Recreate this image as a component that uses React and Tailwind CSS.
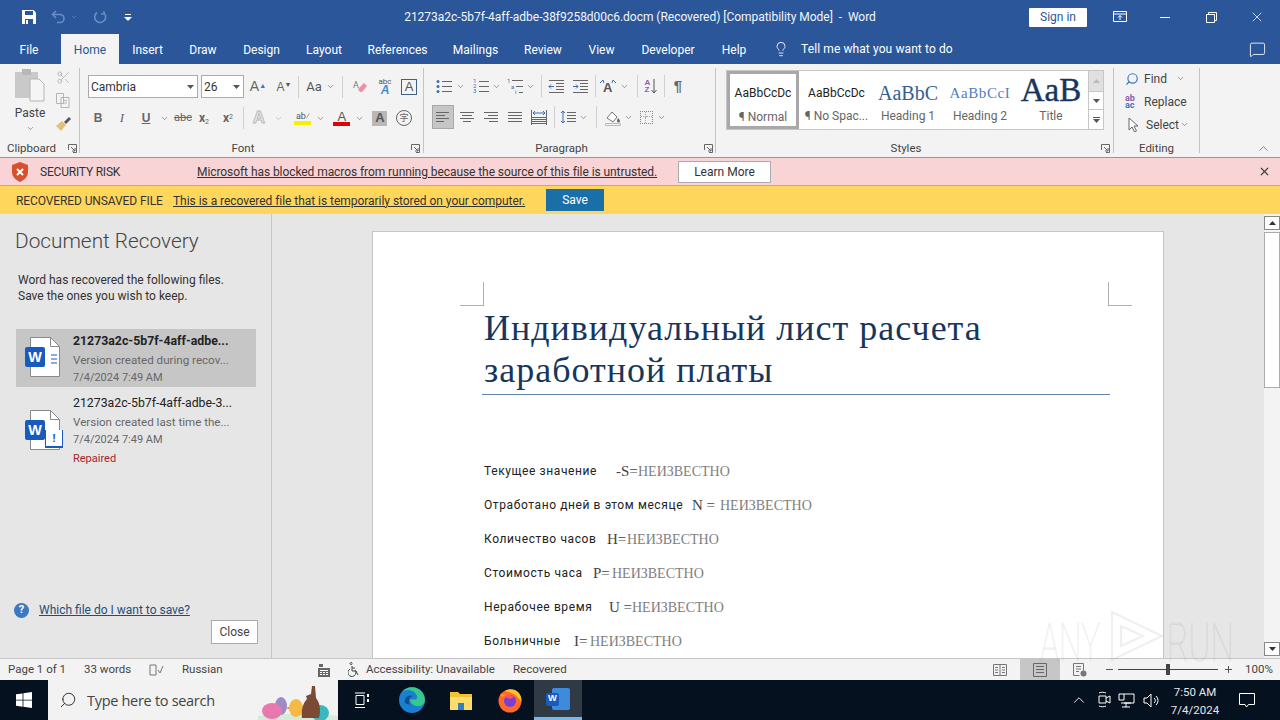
import React from 'react';
import { ChevronDown, ChevronUp, Lightbulb, MessageSquare, Scissors, Search, X } from 'lucide-react';

const Chev = ({ className = '' }) => <ChevronDown size={9} strokeWidth={1.5} className={`text-[#555] shrink-0 ${className}`} />;

const Launcher = () => (
  <svg width="9" height="9" viewBox="0 0 9 9" className="shrink-0" fill="none" stroke="#666">
    <path d="M.5 6V.5H8.5V8.5H5" />
    <path d="M3 3l4 4M4 7h3V4" />
  </svg>
);

const Sep = ({ className = '' }) => <div className={`w-px h-[22px] bg-[#d0d0d0] shrink-0 ${className}`} />;

const GroupSep = () => <div className="w-px my-[4px] bg-[#c4c4c4] shrink-0" />;

// little "lines" glyph used by the paragraph buttons
const Lines = ({ ys, x1 = 1, x2 = 15, color = '#666', w = 16, h = 16, extra = null }) => (
  <svg width={w} height={h} viewBox={`0 0 ${w} ${h}`} fill="none" stroke={color}>
    {ys.map((y, i) => (
      <path key={i} d={`M${Array.isArray(x1) ? x1[i] : x1} ${y + 0.5}H${Array.isArray(x2) ? x2[i] : x2}`} />
    ))}
    {extra}
  </svg>
);

const WordBadge = ({ size = 20 }) => (
  <div
    className="bg-[#185abd] rounded-[2px] text-white font-bold flex items-center justify-center font-['Liberation_Sans',sans-serif] leading-none"
    style={{ width: size, height: size, fontSize: size * 0.72 }}
  >
    W
  </div>
);

const tabs = [
  { label: 'File', cls: 'w-[58px]' },
  { label: 'Home', cls: 'w-[58px] ml-[3px] bg-[#f3f3f3] text-[#2b579a]' },
  { label: 'Insert', cls: 'w-[57px]' },
  { label: 'Draw', cls: 'w-[54px]' },
  { label: 'Design', cls: 'w-[63px]' },
  { label: 'Layout', cls: 'w-[62px]' },
  { label: 'References', cls: 'w-[85px]' },
  { label: 'Mailings', cls: 'w-[71px]' },
  { label: 'Review', cls: 'w-[64px]' },
  { label: 'View', cls: 'w-[53px]' },
  { label: 'Developer', cls: 'w-[80px]' },
  { label: 'Help', cls: 'w-[52px]' },
];

function TitleBar() {
  return (
    <div className="bg-[#2b579a] text-white h-[64px] shrink-0 flex flex-col">
      <div className="h-[34px] grid grid-cols-[1fr_auto_1fr] items-center">
        <div className="flex items-center pl-[21px]">
          <svg width="16" height="16" viewBox="0 0 16 16">
            <path fill="#fff" d="M1 1h11.5L15 3.5V15H1z" />
            <path fill="#2b579a" d="M4 2h8v4H4zM4 10h8v5H4z" />
            <path fill="#fff" d="M5 11h2v4H5z" />
          </svg>
          <svg width="16" height="14" viewBox="0 0 16 14" fill="none" stroke="#6a8cc0" strokeWidth="1.6" className="ml-[14px]">
            <path d="M5 1L1.5 4.5 5 8M2 4.5h7a4 4 0 010 8H6" />
          </svg>
          <ChevronDown size={8} className="text-[#6a8cc0] ml-[3px]" />
          <svg width="14" height="14" viewBox="0 0 14 14" fill="none" stroke="#6a8cc0" strokeWidth="1.6" className="ml-[15px]">
            <path d="M4 2.5a5.5 5.5 0 107 .5M11 1v3H8" />
          </svg>
          <svg width="8" height="7" viewBox="0 0 8 7" className="ml-[17px]" fill="#fff">
            <path d="M1 0h6v1H1zM0 3h8L4 7z" />
          </svg>
        </div>
        <div className="text-[12px] text-[#f2f5fa] whitespace-nowrap tracking-[-0.03px]">
          21273a2c-5b7f-4aff-adbe-38f9258d00c6.docm (Recovered) [Compatibility Mode] &nbsp;-&nbsp; Word
        </div>
        <div className="flex items-center justify-end h-full">
          <div className="w-[58px] h-[19px] bg-white rounded-[1px] text-[#2b579a] text-[12px] flex items-center justify-center">Sign in</div>
          <div className="w-[55px] pl-[10px] flex justify-center">
            <svg width="14" height="12" viewBox="0 0 14 12" fill="none" stroke="#fff">
              <path d="M.5.5h13v10H.5zM.5 3h13M7 9V4.5M5 6.5l2-2 2 2" />
            </svg>
          </div>
          <div className="w-[46px] flex justify-center">
            <div className="w-[10px] h-px bg-white" />
          </div>
          <div className="w-[46px] flex justify-center">
            <svg width="11" height="11" viewBox="0 0 11 11" fill="none" stroke="#fff">
              <path d="M.5 2.5h8v8h-8zM2.5 2.5v-2h8v8h-2" />
            </svg>
          </div>
          <div className="w-[46px] flex justify-center pr-[1px]">
            <X size={16} strokeWidth={1.1} />
          </div>
        </div>
      </div>
      <div className="h-[30px] flex text-[12px] items-stretch">
        {tabs.map((t) => (
          <div key={t.label} className={`flex items-center justify-center pt-[1px] ${t.cls}`}>{t.label}</div>
        ))}
        <div className="flex items-center ml-[13px]">
          <Lightbulb size={16} strokeWidth={1.3} />
          <span className="ml-[12px] text-[12px] tracking-[0.1px]">Tell me what you want to do</span>
        </div>
        <div className="ml-auto flex items-center pr-[14px]">
          <MessageSquare size={17} strokeWidth={1.2} />
        </div>
      </div>
    </div>
  );
}

const GroupLabel = ({ children, launcher = true, className = '' }) => (
  <div className={`h-[15px] shrink-0 flex items-center text-[11.5px] text-[#444] ${className}`}>
    <span className={`flex-1 text-center ${launcher ? 'pr-[5px]' : ''}`}>{children}</span>
    {launcher && <Launcher />}
  </div>
);

const Tool = ({ children, className = 'w-6' }) => (
  <div className={`h-6 flex items-center justify-center shrink-0 ${className}`}>{children}</div>
);

function ClipboardGroup() {
  return (
    <div className="w-[79px] shrink-0 flex flex-col mb-[1px]">
      <div className="flex-1 flex pl-[13px] pt-[5px]">
        <div className="w-[34px] flex flex-col items-center">
          <svg width="30" height="33" viewBox="0 0 30 33">
            <rect x="0" y="3" width="23" height="26" fill="#c9c9c9" />
            <rect x="7" y="0" width="9" height="6" fill="#b8b8b8" />
            <path d="M15 10h9l5 5v17H15z" fill="#f5f5f5" stroke="#b5b5b5" />
          </svg>
          <span className="text-[12px] text-[#444] mt-[3px] leading-[16px]">Paste</span>
          <Chev className="mt-[3px]" />
        </div>
        <div className="flex flex-col items-center ml-[1px] w-[30px] pt-[1px] gap-[7px]">
          <Scissors size={15} strokeWidth={1.2} className="text-[#aaa]" />
          <svg width="16" height="16" viewBox="0 0 16 16" fill="none" stroke="#b5b5b5">
            <path d="M1.5 1.5h7v10h-7zM6 5.5h8v10H6zM8 8.5h4M8 11h4" />
          </svg>
          <svg width="17" height="17" viewBox="0 0 17 17">
            <path d="M1 11l6-5 4 4-5 6z" fill="#e3c07a" />
            <path d="M9 7l5-5 2 2-5 5z" fill="#555" />
          </svg>
        </div>
      </div>
      <GroupLabel className="pr-[2px]">Clipboard</GroupLabel>
    </div>
  );
}

function FontGroup() {
  return (
    <div className="w-[343px] shrink-0 flex flex-col mb-[1px]">
      <div className="flex-1 pt-[11px]">
        <div className="flex items-center h-[23px] pl-[8px]">
          <div className="w-[110px] h-[23px] border border-[#ababab] bg-white text-[12px] text-[#333] pl-[2px] flex items-center justify-between pr-[3px]">
            Cambria
            <svg width="7" height="4" viewBox="0 0 7 4" fill="#555"><path d="M0 0h7L3.5 4z" /></svg>
          </div>
          <div className="w-[43px] h-[23px] ml-[3px] border border-[#ababab] bg-white text-[12px] text-[#333] pl-[2px] flex items-center justify-between pr-[3px]">
            26
            <svg width="7" height="4" viewBox="0 0 7 4" fill="#555"><path d="M0 0h7L3.5 4z" /></svg>
          </div>
          <Tool className="w-[26px] ml-[1px]">
            <span className="text-[#666] text-[14px] font-['Liberation_Sans',sans-serif]">A<sup className="text-[7px] text-[#3f6fb5]">▲</sup></span>
          </Tool>
          <Tool className="w-[26px]">
            <span className="text-[#666] text-[12px] font-['Liberation_Sans',sans-serif]">A<sup className="text-[7px] text-[#555]">▼</sup></span>
          </Tool>
          <Sep className="ml-[1px]" />
          <div className="w-[43px] h-6 flex items-center justify-center gap-[4px] text-[#555] text-[13px]">Aa<Chev /></div>
          <Sep />
          <Tool className="w-[34px]">
            <svg width="15" height="15" viewBox="0 0 15 15">
              <text x="0" y="9" fontSize="9" fill="#777">A</text>
              <path d="M5 10l6-6 3 3-5 6H7z" fill="#ee8fa3" />
            </svg>
          </Tool>
          <Tool className="w-[14px] ml-[1px]">
            <div className="flex flex-col items-center leading-none -space-y-[2px]">
              <span className="text-[8px] text-[#555]">abc</span>
              <span className="text-[12px] font-bold italic text-[#3d8ecf] font-['Liberation_Sans',sans-serif]">A</span>
            </div>
          </Tool>
          <div className="ml-[9px] w-[16px] h-[16px] border border-[#3f6184] flex items-center justify-center text-[13px] text-[#555] font-['Liberation_Sans',sans-serif] leading-none">A</div>
        </div>
        <div className="flex items-center h-[24px] pl-[6px] mt-[8px] text-[#666]">
          <Tool><span className="text-[12px] font-bold font-['Liberation_Sans',sans-serif]">B</span></Tool>
          <Tool><span className="text-[13px] italic font-['Liberation_Serif',serif]">I</span></Tool>
          <Tool><span className="text-[12px] font-bold underline font-['Liberation_Sans',sans-serif]">U</span></Tool>
          <Tool className="w-[12px]"><Chev /></Tool>
          <Tool className="ml-[4px]"><span className="text-[11px] line-through">abc</span></Tool>
          <Tool><span className="text-[12px] font-bold">x<sub className="text-[7px] font-normal">2</sub></span></Tool>
          <Tool><span className="text-[12px] font-bold">x<sup className="text-[7px] font-normal">2</sup></span></Tool>
          <Sep className="ml-[3px]" />
          <Tool className="w-[30px]"><span className="text-[17px] text-[#ededed] [-webkit-text-stroke:1px_#bbb] font-['Liberation_Sans',sans-serif] font-bold">A</span></Tool>
          <Tool className="w-[10px]"><ChevronDown size={9} className="text-[#bbb]" /></Tool>
          <Tool className="w-[24px] ml-[7px]">
            <div className="flex flex-col items-center">
              <span className="text-[9px] leading-[10px] text-[#555]">ab<span className="text-[#777]">⁄</span></span>
              <div className="w-[17px] h-[4px] bg-[#f4f000]" />
            </div>
          </Tool>
          <Tool className="w-[12px]"><Chev /></Tool>
          <Tool className="w-[26px] ml-[2px]">
            <div className="flex flex-col items-center">
              <span className="text-[13px] leading-[11px] text-[#555] font-['Liberation_Sans',sans-serif]">A</span>
              <div className="w-[17px] h-[4px] bg-[#e00000]" />
            </div>
          </Tool>
          <Tool className="w-[10px]"><Chev /></Tool>
          <Tool className="ml-[6px] w-[18px]">
            <div className="w-[15px] h-[15px] bg-[#b8b8b8] flex items-center justify-center text-[13px] font-bold text-[#555] font-['Liberation_Sans',sans-serif]">A</div>
          </Tool>
          <Tool className="ml-[6px] w-[18px]">
            <div className="w-[16px] h-[16px] rounded-full border border-[#666] flex items-center justify-center text-[9px] font-['Noto_Sans_CJK_SC',sans-serif]">字</div>
          </Tool>
        </div>
      </div>
      <GroupLabel className="pr-[3px]">Font</GroupLabel>
    </div>
  );
}

function ParagraphGroup() {
  const bullets = (
    <Lines ys={[3, 8, 13]} x1={6} x2={16} extra={<g fill="#3d6db0" stroke="none"><circle cx="2" cy="3.5" r="1.5" /><circle cx="2" cy="8.5" r="1.5" /><circle cx="2" cy="13.5" r="1.5" /></g>} />
  );
  const numbers = (
    <Lines ys={[3, 8, 13]} x1={6} x2={16} extra={<g fill="#3d6db0" stroke="none" fontSize="6"><text x="0" y="5">1</text><text x="0" y="10">2</text><text x="0" y="15">3</text></g>} />
  );
  const multi = (
    <Lines ys={[2, 8, 14]} x1={[5, 9, 12]} x2={16} extra={<g fill="#3d6db0" stroke="none" fontSize="6"><text x="0" y="5">1</text><text x="4" y="11">a</text><text x="8" y="16">i</text></g>} />
  );
  return (
    <div className="w-[291px] shrink-0 flex flex-col mb-[1px]">
      <div className="flex-1 pt-[10px]">
        <div className="flex items-center h-6 pl-[10px]">
          <Tool className="w-[20px]">{bullets}</Tool>
          <Chev className="ml-[2px]" />
          <Tool className="w-[20px] ml-[6px]">{numbers}</Tool>
          <Chev className="ml-[1px]" />
          <Tool className="w-[20px] ml-[4px]">{multi}</Tool>
          <Chev className="ml-[1px]" />
          <Sep className="ml-[6px]" />
          <Tool className="w-[24px] ml-[2px]">
            <Lines ys={[2, 5, 8, 11, 14]} x1={[1, 8, 8, 8, 1]} x2={16} extra={<path d="M6 8.5H1M3 6.5L1 8.5l2 2" stroke="#3d6db0" />} />
          </Tool>
          <Tool className="w-[24px]">
            <Lines ys={[2, 5, 8, 11, 14]} x1={[1, 8, 8, 8, 1]} x2={16} extra={<path d="M1 8.5h5M4 6.5l2 2-2 2" stroke="#3d6db0" />} />
          </Tool>
          <Sep className="ml-[3px]" />
          <Tool className="w-[24px]">
            <svg width="18" height="16" viewBox="0 0 18 16" fill="none">
              <text x="4" y="14" fontSize="13" fontWeight="bold" fill="#555" fontFamily="Liberation Sans">A</text>
              <path d="M1 5l3-3 1 3M17 5l-3-3-1 3" stroke="#3d6db0" />
            </svg>
          </Tool>
          <Chev />
          <Sep className="ml-[8px]" />
          <Tool className="w-[24px] ml-[1px]">
            <div className="flex items-center">
              <div className="text-[8px] leading-[7px] font-bold text-[#8a5fb5] font-['Liberation_Sans',sans-serif]">A<br />Z</div>
              <svg width="6" height="15" viewBox="0 0 6 15" fill="none" stroke="#555" className="ml-[1px]"><path d="M3 0v14M.5 11L3 14l2.5-3" /></svg>
            </div>
          </Tool>
          <Sep className="ml-[1px]" />
          <Tool className="w-[24px] ml-[1px]"><span className="text-[15px] text-[#666] font-['Liberation_Sans',sans-serif] font-bold">¶</span></Tool>
        </div>
        <div className="flex items-center h-[24px] pl-[8px] mt-[7px]">
          <Tool className="w-[22px] bg-[#c6c6c6] border border-[#a8a8a8]"><Lines ys={[3, 6, 9, 12]} x2={[14, 10, 14, 9]} /></Tool>
          <Tool className="w-[24px] ml-[1px]"><Lines ys={[3, 6, 9, 12]} x1={[1, 3, 1, 4]} x2={[15, 13, 15, 12]} /></Tool>
          <Tool className="w-[24px]"><Lines ys={[3, 6, 9, 12]} x1={[1, 5, 1, 6]} /></Tool>
          <Tool className="w-[24px]"><Lines ys={[3, 6, 9, 12]} /></Tool>
          <Tool className="w-[24px]">
            <Lines ys={[8, 10, 12, 14]} extra={<><path d="M.5 1v15M15.5 1v15" stroke="#666" /><path d="M2 4h12M4 2L2 4l2 2M12 2l2 2-2 2" stroke="#3d6db0" /></>} />
          </Tool>
          <Sep className="ml-[3px]" />
          <Tool className="w-[20px] ml-[3px]">
            <Lines ys={[3, 6, 9, 12]} x1={7} x2={16} extra={<path d="M3 2v12M1 4l2-2 2 2M1 12l2 2 2-2" stroke="#3d6db0" />} />
          </Tool>
          <Chev className="ml-[1px]" />
          <Sep className="ml-[8px]" />
          <Tool className="w-[20px] ml-[6px]">
            <svg width="17" height="17" viewBox="0 0 17 17" fill="none">
              <path d="M2 9l5-6 5 5-4 5z" stroke="#777" fill="#fff" />
              <path d="M13 9s2 2 2 3a1.5 1.5 0 01-3 0c0-1 1-3 1-3z" fill="#666" />
              <path d="M.5 14.5h15v2H.5z" stroke="#bbb" />
            </svg>
          </Tool>
          <Chev className="ml-[1px]" />
          <Tool className="w-[16px] ml-[5px]">
            <div className="w-[13px] h-[13px] border border-dotted border-[#888] grid grid-cols-2 grid-rows-2"><div className="border-r border-b border-dotted border-[#aaa]" /><div className="border-b border-dotted border-[#aaa]" /><div className="border-r border-dotted border-[#aaa]" /><div /></div>
          </Tool>
          <Chev className="ml-[3px]" />
        </div>
      </div>
      <GroupLabel className="pr-[2px]">Paragraph</GroupLabel>
    </div>
  );
}

const styles = [
  { cls: 'w-[71px] ml-[2px]', preview: 'AaBbCcDc', label: '¶ No Spac...', pv: 'text-[12px] text-[#222]' },
  { cls: 'w-[72px]', preview: 'AaBbC', label: 'Heading 1', pv: "text-[20px] text-[#365f91] font-['Liberation_Serif',serif]" },
  { cls: 'w-[72px]', preview: 'AaBbCcI', label: 'Heading 2', pv: "text-[15px] text-[#4f81bd] font-['Liberation_Serif',serif] tracking-[0.6px]" },
  { cls: 'w-[70px]', preview: 'AaB', label: 'Title', pv: "text-[33px] text-[#17365d] font-['Liberation_Serif',serif] pb-[5px] [-webkit-text-stroke:0.4px_#17365d]" },
];

function StylesGroup() {
  return (
    <div className="w-[397px] shrink-0 flex flex-col mb-[1px]">
      <div className="flex-1 pt-[6px] pl-[10px]">
        <div className="w-[378px] h-[60px] border border-[#c6c6c6] bg-white flex">
          <div className="w-[72px] h-[58px] border-[3px] border-[#a8a8a8] flex flex-col items-center overflow-hidden outline-1 outline-white -outline-offset-4">
            <div className="h-[34px] mt-[2px] flex items-center text-[12px] text-[#222] whitespace-nowrap">AaBbCcDc</div>
            <div className="text-[12px] text-[#666] leading-[14px]">¶ Normal</div>
          </div>
          {styles.map((s) => (
            <div key={s.label} className={`h-[58px] flex flex-col items-center overflow-hidden ${s.cls}`}>
              <div className={`h-[30px] mt-[7px] flex items-center justify-center whitespace-nowrap w-full overflow-hidden leading-none ${s.pv}`}>{s.preview}</div>
              <div className="text-[12px] text-[#666] leading-[14px] mt-[1px] whitespace-nowrap">{s.label}</div>
            </div>
          ))}
          <div className="ml-auto w-[15px] border-l border-[#c6c6c6] flex flex-col">
            <div className="h-[21px] bg-[#e0e0e0] border-b border-[#c6c6c6] flex items-center justify-center">
              <svg width="7" height="4" viewBox="0 0 7 4" fill="#bbb"><path d="M0 4h7L3.5 0z" /></svg>
            </div>
            <div className="h-[18px] border-b border-[#c6c6c6] flex items-center justify-center">
              <svg width="7" height="4" viewBox="0 0 7 4" fill="#555"><path d="M0 0h7L3.5 4z" /></svg>
            </div>
            <div className="flex-1 flex flex-col items-center justify-center gap-[1px]">
              <div className="w-[7px] h-px bg-[#555]" />
              <svg width="7" height="4" viewBox="0 0 7 4" fill="#555"><path d="M0 0h7L3.5 4z" /></svg>
            </div>
          </div>
        </div>
      </div>
      <GroupLabel className="pr-[3px]">Styles</GroupLabel>
    </div>
  );
}

function EditingGroup() {
  return (
    <div className="w-[85px] shrink-0 flex flex-col mb-[1px]">
      <div className="flex-1 pt-[3px] pl-[11px] text-[12px] text-[#444]">
        <div className="h-[23px] flex items-center">
          <Search size={14} strokeWidth={2} className="text-[#3d78c0] -scale-x-100" />
          <span className="ml-[5px]">Find</span>
          <Chev className="ml-[9px]" />
        </div>
        <div className="h-[23px] flex items-center">
          <div className="text-[9px] leading-[7px] font-bold text-[#3d78c0] w-[16px]"><span className="text-[#8a5fb5]">ab</span><br />ac</div>
          <span className="ml-[3px]">Replace</span>
        </div>
        <div className="h-[23px] flex items-center">
          <svg width="12" height="15" viewBox="0 0 12 15" fill="#fff" stroke="#666" className="ml-[3px]"><path d="M1 1l9 8H6l2.5 5-2 1L4 10l-3 3z" /></svg>
          <span className="ml-[6px]">Select</span>
          <Chev className="ml-[1px]" />
        </div>
      </div>
      <GroupLabel launcher={false}>Editing</GroupLabel>
    </div>
  );
}

function Ribbon() {
  return (
    <div className="h-[93px] bg-[#f3f3f3] shrink-0 flex">
      <ClipboardGroup />
      <GroupSep />
      <FontGroup />
      <GroupSep />
      <ParagraphGroup />
      <GroupSep />
      <StylesGroup />
      <GroupSep />
      <EditingGroup />
      <GroupSep />
      <div className="flex-1 flex items-end justify-end pr-[9px] pb-[1px]">
        <ChevronUp size={15} strokeWidth={1.1} className="text-[#555]" />
      </div>
    </div>
  );
}

function SecurityBar() {
  return (
    <div className="h-[29px] shrink-0 bg-[#f9d4d6] border-t border-[#b9878a] border-b-[1px] border-b-[#d6a56a] flex items-center text-[12px] text-[#333]">
      <svg width="20" height="20" viewBox="0 0 20 20" className="ml-[10px]">
        <path d="M10 0l8 3v7c0 5-4 8-8 10-4-2-8-5-8-10V3z" fill="#d9512c" />
        <path d="M7 7l6 6M13 7l-6 6" stroke="#fff" strokeWidth="2" />
      </svg>
      <span className="ml-[10px] w-[157px] pt-[1px] tracking-[-0.2px]">SECURITY RISK</span>
      <span className="underline tracking-[-0.07px] w-[481px] pt-[1px] whitespace-nowrap">Microsoft has blocked macros from running because the source of this file is untrusted.</span>
      <div className="w-[93px] h-[22px] bg-white border border-[#ababab] flex items-center justify-center text-[#333]">Learn More</div>
      <X size={13} strokeWidth={2.2} className="ml-auto mr-[9px] text-[#444]" />
    </div>
  );
}

function RecoveryBar() {
  return (
    <div className="h-[28px] shrink-0 bg-[#ffd65c] flex items-center text-[12px] text-[#333]">
      <span className="ml-[16px] w-[157px] pt-[1px] whitespace-nowrap tracking-[-0.1px]">RECOVERED UNSAVED FILE</span>
      <span className="underline whitespace-nowrap w-[373px] pt-[1px] tracking-[-0.04px]">This is a recovered file that is temporarily stored on your computer.</span>
      <div className="w-[58px] h-[22px] bg-[#1a6fa8] text-white flex items-center justify-center -mt-[1px]">Save</div>
    </div>
  );
}

function RecoveryFile({ name, selected, sub, repaired }) {
  return (
    <div className={`w-[240px] flex pl-[9px] ${selected ? 'bg-[#c6c6c6] h-[58px] pt-[3px]' : 'h-[72px] mt-[5px] pt-[2px]'}`}>
      <div className={`w-[48px] shrink-0 relative ${selected ? 'pt-[5px]' : 'pt-[16px]'}`}>
        <svg width="30" height="40" viewBox="0 0 30 40" fill="none" className="ml-[5px]">
          <path d="M.5.5h20l9 9v30H.5z" fill="#fff" stroke="#8a8a8a" />
          <path d="M20.5.5v9h9" stroke="#8a8a8a" />
          {selected && <path d="M21 18h6M21 22h6M21 26h6" stroke="#185abd" />}
        </svg>
        <div className={`absolute left-0 ${selected ? 'top-[15px]' : 'top-[26px]'}`}><WordBadge size={20} /></div>
        {repaired && <div className="absolute left-[20px] top-[36px] w-[18px] h-[18px] bg-white border-b-2 border-x border-[#185abd] text-[#185abd] text-[11px] font-bold flex items-center justify-center leading-none">!</div>}
      </div>
      <div className="min-w-0 text-[11px] leading-[18.5px] whitespace-nowrap">
        <div className={`text-[12.3px] text-[#222] ${selected ? 'font-bold' : ''}`}>{name}</div>
        <div className="text-[#666] text-[11.6px]">{sub}</div>
        <div className="text-[#666]">7/4/2024 7:49 AM</div>
        {repaired && <div className="text-[#a4262c]">Repaired</div>}
      </div>
    </div>
  );
}

function RecoveryPanel() {
  return (
    <div className="w-[272px] shrink-0 border-r border-[#c6c6c6] flex flex-col pl-[16px] pr-[13px] pb-[14px]">
      <div className="text-[20.8px] font-light text-[#444] -ml-[1px] mt-[14px] leading-[27px]">Document Recovery</div>
      <div className="text-[12px] leading-[16px] text-[#333] ml-[2px] mt-[17px]">
        Word has recovered the following files.<br />Save the ones you wish to keep.
      </div>
      <div className="mt-[25px]">
        <RecoveryFile selected name="21273a2c-5b7f-4aff-adbe..." sub="Version created during recov..." />
        <RecoveryFile repaired name="21273a2c-5b7f-4aff-adbe-3..." sub="Version created last time the..." />
      </div>
      <div className="mt-auto flex items-center -ml-[2px] pb-[1px]">
        <div className="w-[15px] h-[15px] rounded-full bg-[#3d78c0] text-white text-[11px] font-bold flex items-center justify-center">?</div>
        <span className="ml-[10px] text-[12px] text-[#1f4e79] underline">Which file do I want to save?</span>
      </div>
      <div className="self-end w-[47px] h-[24px] bg-white border border-[#ababab] text-[12px] text-[#444] flex items-center justify-center">Close</div>
    </div>
  );
}

const rows = [
  { label: 'Текущее значение', lw: 'w-[116px]', eq: '-S=', cls: 'ml-[16px] w-[22px]' },
  { label: 'Отработано дней в этом месяце', lw: 'w-[201px]', eq: 'N = ', cls: 'ml-[7px] w-[28px]' },
  { label: 'Количество часов', lw: 'w-[110px]', eq: 'H=', cls: 'ml-[13px] w-[20px]' },
  { label: 'Стоимость часа', lw: 'w-[96px]', eq: 'P=', cls: 'ml-[13px] w-[19px]' },
  { label: 'Нерабочее время', lw: 'w-[110px]', eq: 'U =', cls: 'ml-[15px] w-[23px]' },
  { label: 'Больничные', lw: 'w-[78px]', eq: 'I=', cls: 'ml-[12px] w-[16px]' },
];

function DocPage() {
  return (
    <div className="w-[792px] h-[600px] bg-white border border-[#c6c6c6] mx-auto mt-[17px] shrink-0 overflow-hidden">
      <div className="mt-[50px] ml-[87px] mr-[31px] h-[24px] flex justify-between">
        <div className="w-[24px] h-[24px] border-r border-b border-[#b0b0b0]" />
        <div className="w-[24px] h-[24px] border-l border-b border-[#b0b0b0]" />
      </div>
      <div className="ml-[109px] mr-[53px] mt-[1px] pl-[2px] pb-[3px] border-b border-[#5f82ab] font-['Liberation_Serif',serif] text-[36px] leading-[42px] text-[#17365d] tracking-[1px]">
        Индивидуальный лист расчета<br />заработной платы
      </div>
      <div className="mt-[59px] ml-[111px]">
        {rows.map((r) => (
          <div key={r.label} className="h-[34px] flex items-center text-[12px] text-[#222] whitespace-nowrap">
            <span className={`tracking-[0.6px] ${r.lw}`}>{r.label}</span>
            <span className={`${r.cls} font-['Liberation_Serif',serif] text-[15px] text-[#444] whitespace-pre`}>{r.eq}</span>
            <span className="font-['Liberation_Serif',serif] text-[14px] text-[#808080]">НЕИЗВЕСТНО</span>
          </div>
        ))}
      </div>
    </div>
  );
}

function ScrollBar() {
  return (
    <div className="w-[16px] shrink-0 bg-[#f3f3f3] flex flex-col pt-[2px] pb-[2px]">
      <div className="h-[14px] bg-white border border-[#888] flex items-center justify-center">
        <svg width="7" height="4" viewBox="0 0 7 4" fill="#333"><path d="M0 4h7L3.5 0z" /></svg>
      </div>
      <div className="h-[156px] mt-[2px] bg-white border border-[#ababab]" />
      <div className="h-[14px] mt-auto bg-white border border-[#888] flex items-center justify-center">
        <svg width="7" height="4" viewBox="0 0 7 4" fill="#333"><path d="M0 0h7L3.5 4z" /></svg>
      </div>
    </div>
  );
}

function StatusBar() {
  return (
    <div className="h-[22px] shrink-0 bg-[#f3f3f3] border-t border-[#c6c6c6] flex items-center text-[11.5px] text-[#444] whitespace-nowrap">
      <span className="ml-[8px] w-[57px]">Page 1 of 1</span>
      <span className="ml-[19px] w-[48px]">33 words</span>
      <svg width="15" height="14" viewBox="0 0 15 14" fill="none" stroke="#777" className="ml-[17px]">
        <path d="M7 2H1v10h6M7 2v10M9 7l2 3 3-7" />
      </svg>
      <span className="ml-[18px] w-[40px]">Russian</span>
      <svg width="14" height="14" viewBox="0 0 14 14" className="ml-[95px]" fill="#666">
        <rect x="1" y="5" width="12" height="9" />
        <rect x="2" y="1" width="4" height="3" />
        <path d="M3 7h8v1H3zM3 9h2v1H3zM6 9h2v1H6zM9 9h2v1H9zM3 11h2v1H3zM6 11h2v1H6zM9 11h2v1H9z" fill="#fff" />
      </svg>
      <svg width="16" height="16" viewBox="0 0 16 16" fill="none" stroke="#444" className="ml-[17px]">
        <path d="M4 1.5a1 1 0 100 .1M4 4v5h4l2 4M4 6h3M7 8a4 4 0 11-5-1" />
      </svg>
      <span className="ml-[2px] w-[128px]">Accessibility: Unavailable</span>
      <span className="ml-[19px]">Recovered</span>
      <div className="ml-auto flex items-center h-full">
        <svg width="14" height="14" viewBox="0 0 14 14" fill="none" stroke="#777">
          <path d="M.5 1.5h13v11H.5zM7 1.5v11M2 4.5h3M2 7h3M2 9.5h3M9 4.5h3M9 7h3M9 9.5h3" />
        </svg>
        <div className="w-[40px] h-full bg-[#c6c6c6] ml-[13px] flex items-center justify-center">
          <svg width="14" height="14" viewBox="0 0 14 14" fill="none" stroke="#666">
            <path d="M.5.5h13v13H.5zM3 3.5h8M3 6.5h8M3 9.5h8" />
          </svg>
        </div>
        <svg width="14" height="14" viewBox="0 0 14 14" fill="none" stroke="#777" className="ml-[13px]">
          <path d="M.5.5h10v7M.5.5v12h6M3 3.5h5M3 6h5M3 8.5h3" />
          <circle cx="10.5" cy="10.5" r="3" fill="#777" stroke="none" />
        </svg>
        <span className="ml-[19px] w-[7px] h-px bg-[#555]" />
        <div className="ml-[5px] w-[100px] h-px bg-[#444] flex items-center justify-center">
          <div className="w-[4px] h-[11px] bg-[#444]" />
        </div>
        <svg width="7" height="7" viewBox="0 0 7 7" stroke="#555" className="ml-[7px]"><path d="M0 3.5h7M3.5 0v7" /></svg>
        <span className="ml-[13px] mr-[8px] w-[27px]">100%</span>
      </div>
    </div>
  );
}

function Taskbar() {
  return (
    <div className="h-[40px] shrink-0 bg-[#061120] flex items-stretch text-white">
      <div className="w-[48px] flex items-center justify-center">
        <svg width="16" height="16" viewBox="0 0 16 16" fill="#fff"><path d="M0 2.3l6.6-.9v6.3H0zM7.4 1.3L16 0v7.7H7.4zM0 8.4h6.6v6.3L0 13.8zM7.4 8.4H16V16l-8.6-1.2z" /></svg>
      </div>
      <div className="w-[290px] bg-[#f2f2f2] flex items-center relative overflow-hidden">
        <Search size={18} strokeWidth={1.2} className="ml-[11px] text-[#222] -scale-x-100" />
        <span className="ml-[10px] pt-[1px] text-[14.5px] text-[#444] font-['Open_Sans',sans-serif] tracking-[-0.3px]">Type here to search</span>
        <svg width="80" height="40" viewBox="0 0 80 40" className="absolute right-0 top-0">
          <path d="M0 36c20-3 60-3 80 0v4H0z" fill="#d5ebd8" />
          <ellipse cx="23" cy="26" rx="6" ry="9" fill="#9f8ac8" />
          <ellipse cx="14" cy="31" rx="10" ry="8" fill="#e878ad" />
          <ellipse cx="62" cy="33" rx="9" ry="8" fill="#3bb8bf" />
          <ellipse cx="38" cy="28" rx="7" ry="9" fill="#f5b945" />
          <path d="M31 27l-3 1 3 1z" fill="#e0762a" />
          <path d="M44 38c-1-8 1-15 5-19l-1-3 5-2 1-8h3l1 12c4 5 5 12 3 20z" fill="#7b4a34" />
        </svg>
      </div>
      <div className="w-[48px] flex items-center justify-center">
        <svg width="16" height="16" viewBox="0 0 16 16" fill="none" stroke="#fff"><path d="M2 3.5h8v9H2zM1 1h10M1 15.5h10" /><path d="M13 2h2v3h-2zM13 7h2v3h-2z" fill="#fff" stroke="none" /></svg>
      </div>
      <div className="w-[49px] ml-[1px] flex items-center justify-center">
        <svg width="26" height="26" viewBox="0 0 26 26">
          <circle cx="13" cy="13" r="13" fill="#1b7fd0" />
          <path d="M26 13A13 13 0 003 5c5-4 13-2 15 4 1 4-3 4-7 3 0 5 5 8 10 7 3-1 5-3 5-6z" fill="#36c98c" />
          <path d="M6 16c-1-5 3-9 8-7-4 1-5 5-3 9z" fill="#0f4f90" />
        </svg>
      </div>
      <div className="w-[49px] flex items-center justify-center">
        <svg width="24" height="22" viewBox="0 0 24 22">
          <path d="M1 3h8l2 2h12v16H1z" fill="#f2c233" />
          <path d="M1 8h22v13H1z" fill="#fbdc6c" />
          <path d="M9 14h6v7H9z" fill="#2f7fc4" />
        </svg>
      </div>
      <div className="w-[49px] flex items-center justify-center">
        <svg width="26" height="26" viewBox="0 0 26 26">
          <circle cx="13" cy="14" r="11.5" fill="#ff6a2a" />
          <path d="M8 4c5-3 11-2 14 2 2 3 3 6 2 9-3-6-8-9-16-11z" fill="#ffc02e" />
          <path d="M3 7l2 3 4-2z" fill="#ff9a2e" />
          <circle cx="13" cy="14" r="6" fill="#7b3fd0" />
          <path d="M8 10c3-3 7-2 9 0l-4 2z" fill="#ff4f6a" />
        </svg>
      </div>
      <div className="w-[48px] bg-[#2f3a44] border-b-[3px] border-[#76b9ed] flex items-center justify-center">
        <div className="relative w-[24px] h-[22px]">
          <div className="absolute right-0 top-0 w-[18px] h-[22px] bg-[#3e8bdc] rounded-[2px]" />
          <div className="absolute left-0 top-[5px]"><WordBadge size={13} /></div>
        </div>
      </div>
      <div className="ml-auto flex items-center">
        <ChevronUp size={18} strokeWidth={1.2} />
        <svg width="14" height="18" viewBox="0 0 14 18" fill="none" stroke="#fff" className="ml-[9px]">
          <path d="M2 5h7v7H2zM9 7l4-2v7l-4-2M2 2c2-1 5-1 7 0M2 15c2 1 5 1 7 0" />
        </svg>
        <svg width="17" height="15" viewBox="0 0 17 15" fill="none" stroke="#fff" className="ml-[7px]">
          <path d="M6 1h10v9H6M1 1h5v6H1zM3 10h10M8 10v4M4 14h8" />
        </svg>
        <svg width="17" height="15" viewBox="0 0 17 15" fill="none" stroke="#fff" className="ml-[8px]">
          <path d="M1 5h3l4-4v13l-4-4H1zM11 5a3 3 0 010 5M13 3a6 6 0 010 9" />
        </svg>
        <div className="w-[52px] ml-[9px] pt-[1px] text-[11.5px] leading-[18px] text-center whitespace-nowrap text-[#e6e6e6]">
          7:50 AM<br />7/4/2024
        </div>
        <div className="w-[46px] ml-[3px] mr-[10px] flex items-center justify-center">
          <svg width="16" height="15" viewBox="0 0 16 15" fill="none" stroke="#fff"><path d="M.5.5h15v11H9.5L7.5 14 6 11.5H.5z" /></svg>
        </div>
      </div>
    </div>
  );
}

export default function App() {
  return (
    <div className="w-[1280px] h-[720px] overflow-hidden flex flex-col relative font-['Roboto',sans-serif] bg-[#e6e6e6]">
      <TitleBar />
      <Ribbon />
      <SecurityBar />
      <RecoveryBar />
      <div className="flex-1 min-h-0 flex">
        <RecoveryPanel />
        <div className="flex-1 min-w-0 overflow-hidden flex flex-col">
          <DocPage />
        </div>
        <ScrollBar />
      </div>
      <StatusBar />
      <Taskbar />
      {/* watermark */}
      <div className="absolute left-[1040px] top-[608px] h-[56px] flex items-center text-transparent [-webkit-text-stroke:1px_rgba(120,120,120,0.14)] text-[53px] font-['Roboto',sans-serif] font-thin leading-none pointer-events-none">
        <span className="w-[70px] inline-block origin-left scale-x-[0.6] mt-[14px]">ANY</span>
        <svg width="54" height="56" viewBox="0 0 54 56" fill="none" stroke="rgba(120,120,120,0.12)" strokeWidth="2">
          <path d="M2 4v48l50-24zM11 18v20l22-10z" />
        </svg>
        <span className="w-[62px] ml-[3px] inline-block origin-left scale-x-[0.62] mt-[14px]">RUN</span>
      </div>
    </div>
  );
}
